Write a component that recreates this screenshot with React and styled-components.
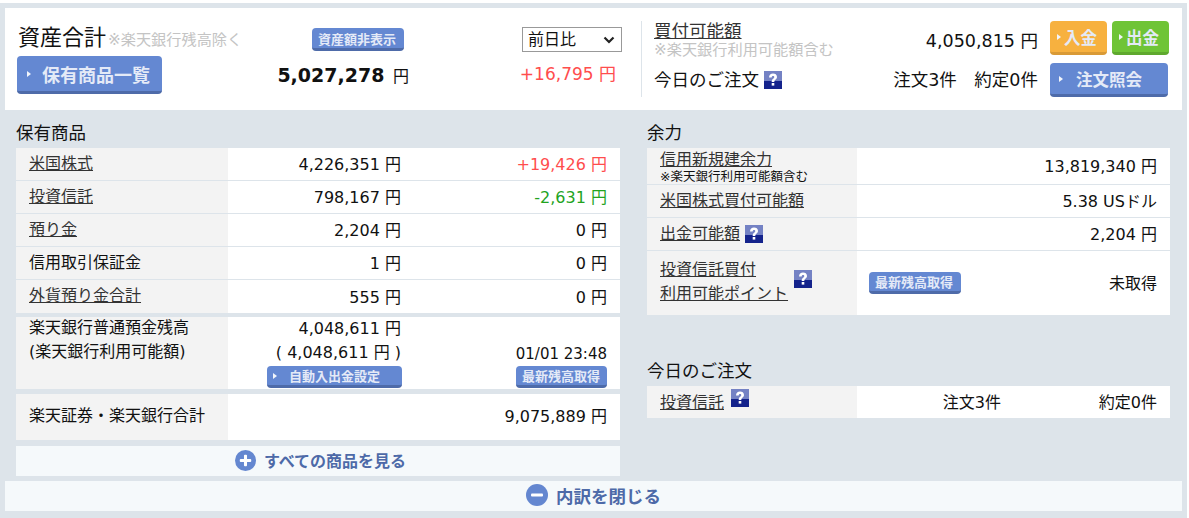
import React from "react";
import styled, { createGlobalStyle } from "styled-components";

const Global = createGlobalStyle`
  html, body { margin: 0; padding: 0; background: #fff; }
  body {
    font-family: "DejaVu Sans", "Noto Sans CJK JP", sans-serif;
    font-size: 16px;
    color: #111;
  }
`;

const Page = styled.div`
  width: 1187px;
  height: 515px;
  margin-top: 3px;
  background: #dde4ea;
  padding: 5px 5px 0;
  box-sizing: border-box;
`;

const Header = styled.section`
  height: 102px;
  background: #fff;
  display: flex;
  box-sizing: border-box;
  padding: 13px 13px 0 12px;
`;

const Summary = styled.div`
  width: 624px;
  height: 76px;
  display: grid;
  grid-template-columns: 255px 137px 1fr;
  border-right: 1px solid #dde4ea;
`;

const TitleCol = styled.div`
  display: flex;
  flex-direction: column;
  gap: 2px;
`;

const Title = styled.div`
  font-size: 22px;
  line-height: 30px;
  white-space: nowrap;
  margin: 2px 0 -1px 1px;
`;

const Note = styled.span`
  font-size: 15.2px;
  color: #c4c4c4;
  margin-left: ${(p) => p.$ml || 0}px;
`;

const Button = styled.button`
  border: 0;
  border-bottom: 3px solid ${(p) => p.$edge || "#4e6ba9"};
  border-radius: 4px;
  background: ${(p) => p.$bg || "#6488d2"};
  color: #e4eaf7;
  font-family: inherit;
  font-weight: 700;
  font-size: ${(p) => p.$size || 16}px;
  width: ${(p) => p.$w}px;
  height: ${(p) => p.$h}px;
  flex: none;
  padding: 0 0 0 ${(p) => p.$pad || 0}px;
  margin-top: ${(p) => p.$top || 0}px;
  margin-right: ${(p) => p.$right || 0}px;
  display: flex;
  align-items: center;
  justify-content: flex-start;
  white-space: nowrap;
`;

const Arrow = styled.i`
  width: 0;
  height: 0;
  border-left: 4px solid #f2f5fb;
  border-top: 3px solid transparent;
  border-bottom: 3px solid transparent;
  margin-right: ${(p) => p.$gap || 6}px;
`;

const AmountCol = styled.div`
  display: flex;
  flex-direction: column;
  align-items: flex-end;
`;

const Total = styled.div`
  margin-top: 9px;
  font-size: 19px;
  font-weight: 700;
  line-height: 30px;
  white-space: nowrap;
  span { font-size: 16px; font-weight: 400; margin-left: 2px; }
`;

const DiffCol = styled.div`
  display: flex;
  flex-direction: column;
  align-items: flex-end;
  padding-right: 19px;
`;

const Select = styled.select`
  appearance: none;
  width: 100px;
  height: 25px;
  margin-top: 6px;
  border: 1px solid #999;
  background: #fff url("data:image/svg+xml,%3Csvg xmlns='http://www.w3.org/2000/svg' width='12' height='8'%3E%3Cpath d='M1.5 1.5 6 6l4.5-4.5' fill='none' stroke='%23222' stroke-width='2.2'/%3E%3C/svg%3E") no-repeat right 6px center;
  font-family: inherit;
  font-size: 16px;
  padding: 0 0 0 5px;
  color: #111;
`;

const Diff = styled.div`
  margin-top: 10px;
  margin-right: 6px;
  color: #ff4d4d;
  font-size: 17px;
  line-height: 24px;
  white-space: nowrap;
`;

const Account = styled.div`
  flex: 1;
  padding-left: 12px;
  display: grid;
  grid-template-columns: 1fr auto;
  grid-template-rows: 42px 34px;
`;

const AccountLine = styled.div`
  display: flex;
  justify-content: space-between;
  padding: 0 12px 4px 0;
  align-items: ${(p) => (p.$center ? "center" : "flex-start")};
`;

const Link = styled.a`
  color: #333;
  text-decoration: underline;
  font-size: ${(p) => p.$size || 16}px;
  line-height: ${(p) => p.$lh || "inherit"};
  white-space: nowrap;
`;

const LinkStack = styled.div`
  display: flex;
  flex-direction: column;
  line-height: 20px;
  ${Note} { line-height: 18px; }
`;

const Plain = styled.span`
  font-size: 17.5px;
  white-space: pre;
`;

const BuyAmount = styled.span`
  font-size: 17.5px;
  margin-top: 6px;
`;

const ButtonRow = styled.div`
  display: flex;
  gap: 5px;
`;

const HelpBox = styled.svg`
  width: 18px;
  height: 18px;
  display: inline-block;
  vertical-align: -3px;
  margin-left: ${(p) => p.$ml || 5}px;
  margin-bottom: ${(p) => p.$lift || 0}px;
  flex: none;
`;

const Help = (props) => (
  <HelpBox viewBox="0 0 18 18" {...props}>
    <rect width="18" height="18" fill="#7482c4" />
    <rect y="10" width="18" height="8" fill="#14238c" />
    <path d="M5 6.5C5 3.8 6.8 2.5 9 2.5s4 1.2 4 3.4c0 2.6-2.7 2.5-2.7 5H7.7c0-3.2 2.6-3 2.6-4.8 0-.8-.5-1.2-1.3-1.2-.9 0-1.3.6-1.3 1.6z" fill="#fff" />
    <rect x="7.7" y="12" width="2.6" height="2.6" fill="#fff" />
  </HelpBox>
);

const RoundBox = styled.svg`
  width: ${(p) => p.$d}px;
  height: ${(p) => p.$d}px;
  flex: none;
`;

const RoundIcon = ({ d, plus }) => (
  <RoundBox $d={d} viewBox="0 0 22 22">
    <circle cx="11" cy="11" r="11" fill="#6487d0" />
    <rect x="5" y="9.4" width="12" height="3.2" rx="1" fill="#fff" />
    {plus && <rect x="9.4" y="5" width="3.2" height="12" rx="1" fill="#fff" />}
  </RoundBox>
);

const Columns = styled.div`
  display: grid;
  grid-template-columns: 604px 523px;
  column-gap: 27px;
  padding-left: 11px;
`;

const Column = styled.div`
  display: flex;
  flex-direction: column;
`;

const Heading = styled.h3`
  margin: 0;
  font-size: 17.5px;
  font-weight: 400;
  line-height: 38px;
  height: 38px;
  padding-top: 4px;
  box-sizing: border-box;
`;

const Table = styled.div`
  display: flex;
  flex-direction: column;
  margin-bottom: ${(p) => p.$mb || 0}px;
`;

const Row = styled.div`
  display: grid;
  grid-template-columns: ${(p) => p.$cols || "212px 186px 1fr"};
  height: ${(p) => p.$h || 33}px;
  background: #fff;
  box-sizing: border-box;
  &:not(:last-child) { border-bottom: 1px solid #dde4ea; }
`;

const Label = styled.div`
  background: #f3f3f3;
  padding: 0 0 ${(p) => p.$pb ?? 5}px 13px;
  display: flex;
  align-items: center;
  font-size: 16px;
  white-space: nowrap;
`;

const Value = styled.div`
  display: flex;
  align-items: center;
  justify-content: flex-end;
  padding: 0 13px ${(p) => p.$pb ?? 2}px 0;
  color: ${(p) => p.$color || "#111"};
  font-size: 16px;
  white-space: nowrap;
`;

const BankBox = styled.div`
  display: grid;
  grid-template-columns: 212px 186px 1fr;
  height: 72px;
  margin-top: 4px;
  background: #fff;
`;

const BankLabel = styled.div`
  background: #f3f3f3;
  padding-left: 13px;
  line-height: 24px;
  font-size: 16px;
  div { margin-top: -1px; }
`;

const BankValues = styled.div`
  display: flex;
  flex-direction: column;
  align-items: flex-end;
  padding-right: 13px;
  line-height: 24px;
  font-size: 16px;
  white-space: nowrap;
`;

const BankMeta = styled.div`
  display: flex;
  flex-direction: column;
  align-items: flex-end;
  justify-content: flex-end;
  padding: 0 13px 1px 0;
  font-size: 15px;
  line-height: 24px;
  white-space: nowrap;
`;

const TotalBox = styled(Row)`
  height: 47px;
  margin-top: 5px;
`;

const ToggleBar = styled.div`
  height: 30px;
  margin-top: 5px;
  background: #f5f9fb;
  display: flex;
  align-items: center;
  justify-content: center;
  gap: ${(p) => p.$gap || 8}px;
  padding: 0 0 2px ${(p) => p.$pl || 0}px;
  box-sizing: border-box;
  color: #4d6aa8;
  font-weight: 700;
  font-size: ${(p) => p.$size || 16}px;
`;

const LinkLines = styled.div`
  display: flex;
  flex-direction: column;
`;

const Sub = styled.span`
  font-size: 12.5px;
  line-height: 14px;
  color: #111;
`;

const Cell = styled.div`
  display: flex;
  align-items: center;
  padding-left: 12px;
`;

const holdings = [
  { name: "米国株式", link: true, amount: "4,226,351 円", diff: "+19,426 円", color: "#ff4d4d" },
  { name: "投資信託", link: true, amount: "798,167 円", diff: "-2,631 円", color: "#23a31e" },
  { name: "預り金", link: true, amount: "2,204 円", diff: "0 円" },
  { name: "信用取引保証金", amount: "1 円", diff: "0 円" },
  { name: "外貨預り金合計", link: true, amount: "555 円", diff: "0 円" },
];

export default function App() {
  return (
    <>
      <Global />
      <Page>
        <Header>
          <Summary>
            <TitleCol>
              <Title>
                資産合計<Note $ml={2}>※楽天銀行残高除く</Note>
              </Title>
              <Button $w={145} $h={38} $size={18} $pad={10}>
                <Arrow $gap={11} />
                保有商品一覧
              </Button>
            </TitleCol>
            <AmountCol>
              <Button $w={92} $h={23} $size={13} $pad={6} $top={7} $right={5}>
                資産額非表示
              </Button>
              <Total>
                5,027,278 <span>円</span>
              </Total>
            </AmountCol>
            <DiffCol>
              <Select defaultValue="前日比">
                <option>前日比</option>
                <option>前週比</option>
              </Select>
              <Diff>+16,795 円</Diff>
            </DiffCol>
          </Summary>
          <Account>
            <AccountLine>
              <LinkStack>
                <Link $size={17.5}>買付可能額</Link>
                <Note>※楽天銀行利用可能額含む</Note>
              </LinkStack>
              <BuyAmount>4,050,815 円</BuyAmount>
            </AccountLine>
            <ButtonRow>
              <Button $w={57} $h={34} $bg="#f7b13f" $edge="#d99a36" $size={16.5} $pad={7}>
                <Arrow $gap={3} />
                入金
              </Button>
              <Button $w={57} $h={34} $bg="#6fc436" $edge="#5ea82e" $size={16.5} $pad={7}>
                <Arrow $gap={3} />
                出金
              </Button>
            </ButtonRow>
            <AccountLine $center>
              <Plain>
                今日のご注文
                <Help />
              </Plain>
              <Plain>注文3件　約定0件</Plain>
            </AccountLine>
            <Button $w={118} $h={34} $size={16.5} $pad={9}>
              <Arrow $gap={13} />
              注文照会
            </Button>
          </Account>
        </Header>

        <Columns>
          <Column>
            <Heading>保有商品</Heading>
            <Table>
              {holdings.map((h) => (
                <Row key={h.name}>
                  <Label>{h.link ? <Link>{h.name}</Link> : h.name}</Label>
                  <Value>{h.amount}</Value>
                  <Value $color={h.color}>{h.diff}</Value>
                </Row>
              ))}
            </Table>
            <BankBox>
              <BankLabel>
                <div>
                  楽天銀行普通預金残高
                  <br />
                  (楽天銀行利用可能額)
                </div>
              </BankLabel>
              <BankValues>
                <span>4,048,611 円</span>
                <span>( 4,048,611 円 )</span>
                <Button $w={135} $h={22} $size={13} $pad={6} $right={-1} $top={1}>
                  <Arrow $gap={12} />
                  自動入出金設定
                </Button>
              </BankValues>
              <BankMeta>
                <span>01/01 23:48</span>
                <Button $w={91} $h={22} $size={13} $pad={6}>
                  最新残高取得
                </Button>
              </BankMeta>
            </BankBox>
            <TotalBox>
              <Label $pb={7}>楽天証券・楽天銀行合計</Label>
              <span />
              <Value $pb={4}>9,075,889 円</Value>
            </TotalBox>
            <ToggleBar $pl={5}>
              <RoundIcon d={21} plus />
              すべての商品を見る
            </ToggleBar>
          </Column>

          <Column>
            <Heading>余力</Heading>
            <Table $mb={33}>
              <Row $cols="210px 1fr" $h={37}>
                <Label $pb={0}>
                  <LinkLines>
                    <Link $lh="21px">信用新規建余力</Link>
                    <Sub>※楽天銀行利用可能額含む</Sub>
                  </LinkLines>
                </Label>
                <Value>13,819,340 円</Value>
              </Row>
              <Row $cols="210px 1fr">
                <Label>
                  <Link>米国株式買付可能額</Link>
                </Label>
                <Value>5.38 USドル</Value>
              </Row>
              <Row $cols="210px 1fr">
                <Label $pb={0}>
                  <Link $lh="24px">出金可能額</Link>
                  <Help />
                </Label>
                <Value>2,204 円</Value>
              </Row>
              <Row $cols="210px 1fr 150px" $h={64}>
                <Label $pb={2}>
                  <LinkLines>
                    <Link $lh="24px">投資信託買付</Link>
                    <Link $lh="24px">利用可能ポイント</Link>
                  </LinkLines>
                  <Help $ml={6} $lift={7} />
                </Label>
                <Cell>
                  <Button $w={92} $h={22} $size={13} $pad={6}>
                    最新残高取得
                  </Button>
                </Cell>
                <Value>未取得</Value>
              </Row>
            </Table>
            <Heading>今日のご注文</Heading>
            <Table>
              <Row $cols="210px 157px 1fr" $h={32}>
                <Label $pb={2}>
                  <Link>投資信託</Link>
                  <Help $ml={7} $lift={6} />
                </Label>
                <Value>注文3件</Value>
                <Value>約定0件</Value>
              </Row>
            </Table>
          </Column>
        </Columns>

        <ToggleBar $size={17.5}>
          <RoundIcon d={22} />
          内訳を閉じる
        </ToggleBar>
      </Page>
    </>
  );
}
